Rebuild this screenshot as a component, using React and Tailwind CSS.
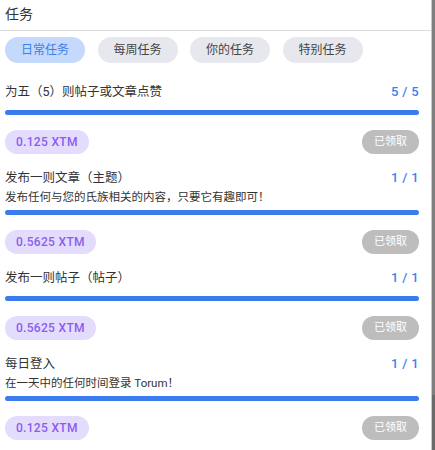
import React from "react";

const tabs = ["日常任务", "每周任务", "你的任务", "特别任务"];

const tasks = [
  { title: "为五（5）则帖子或文章点赞", count: "5 / 5", reward: "0.125 XTM" },
  {
    title: "发布一则文章（主题）",
    desc: "发布任何与您的氏族相关的内容，只要它有趣即可！",
    count: "1 / 1",
    reward: "0.5625 XTM",
  },
  { title: "发布一则帖子（帖子）", count: "1 / 1", reward: "0.5625 XTM" },
  {
    title: "每日登入",
    desc: "在一天中的任何时间登录 Torum！",
    count: "1 / 1",
    reward: "0.125 XTM",
  },
];

const TaskRow = ({ task }) => (
  <div className="mb-[14px]">
    <div className="flex items-center justify-between h-5">
      <span className="text-[12.5px] leading-5 text-[#333]">{task.title}</span>
      <span className="text-[13px] leading-5 font-medium text-[#3b82f0] tracking-wide">
        {task.count}
      </span>
    </div>
    {task.desc && (
      <p className="mt-[1px] text-[11.5px] leading-4 text-[#333]">{task.desc}</p>
    )}
    <div
      className={`${task.desc ? "mt-[5px]" : "mt-2"} h-[5px] w-full rounded-full bg-[#3b7cec]`}
    />
    <div className="mt-[15px] flex items-center justify-between">
      <span className="h-6 px-[11px] flex items-center rounded-full bg-[#e4dcfc] text-[12px] font-medium text-[#8a5cf0] tracking-[0.3px]">
        {task.reward}
      </span>
      <span className="h-6 w-[57px] flex items-center justify-center rounded-full bg-[#bdbdbd] text-[11px] text-white">
        已领取
      </span>
    </div>
  </div>
);

export default function App() {
  return (
    <div
      className="flex w-[435px] h-[450px] overflow-hidden bg-white"
      style={{ fontFamily: 'Roboto, "Noto Sans CJK SC", sans-serif' }}
    >
      <div className="w-[431px] shrink-0 bg-white">
        <div className="h-[31px] border-b border-[#dcdcdc] pl-[5px] pt-[2px]">
          <span className="text-[14px] leading-5 text-[#333]">任务</span>
        </div>
        <div className="flex gap-[12.5px] pl-[5px] mt-[6px]">
          {tabs.map((t, i) => (
            <div
              key={t}
              className={`w-20 h-[26px] flex items-center justify-center rounded-full text-[12px] ${
                i === 0 ? "bg-[#c4d9fb] text-[#3d7fe8]" : "bg-[#e6e8ee] text-[#444]"
              }`}
            >
              {t}
            </div>
          ))}
        </div>
        <div className="pl-[5px] pr-3 mt-[19px]">
          {tasks.map((task) => (
            <TaskRow key={task.title} task={task} />
          ))}
        </div>
      </div>
      <div className="flex-1 flex flex-col border-l border-[#c8c8c8]">
        <div className="h-[395px] bg-[#7f7f7f]" />
        <div className="flex-1 bg-[#6a6a6a]" />
      </div>
    </div>
  );
}
